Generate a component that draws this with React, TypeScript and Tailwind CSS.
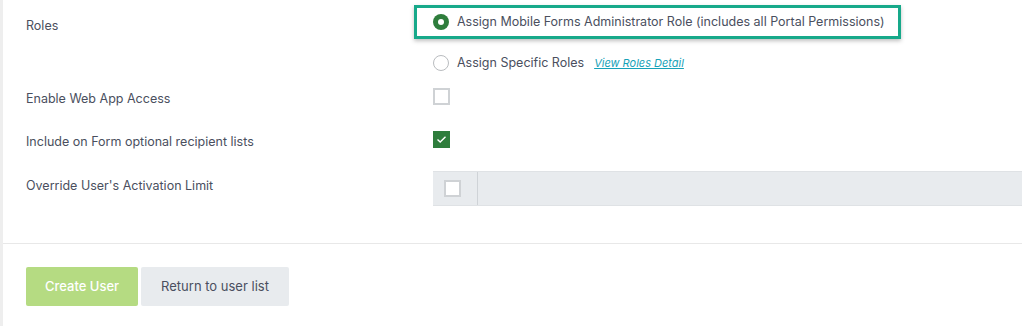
import React, { useState } from 'react';

const font = { fontFamily: 'Inter, "Open Sans", sans-serif' };

function Checkbox({ checked }: { checked?: boolean }) {
  if (checked) {
    return (
      <div className="w-[17px] h-[17px] bg-[#2e7d3c] flex items-center justify-center">
        <svg width="11" height="9" viewBox="0 0 11 9" fill="none">
          <path d="M1.5 4.5L4.2 7L9.5 1.8" stroke="white" strokeWidth="1.4" />
        </svg>
      </div>
    );
  }
  return <div className="w-[17px] h-[17px] border-2 border-[#cfd2d5] bg-white" />;
}

function Radio({ checked }: { checked?: boolean }) {
  if (checked) {
    return (
      <div className="w-4 h-4 rounded-full bg-[#2e7d3c] flex items-center justify-center">
        <div className="w-[6px] h-[6px] rounded-full bg-white" />
      </div>
    );
  }
  return <div className="w-4 h-4 rounded-full border border-[#b9bcbf] bg-white" />;
}

export default function App() {
  const [role] = useState<'admin' | 'specific'>('admin');

  return (
    <div className="h-[326px] w-full bg-white border-l-[3px] border-[#eeeeee] text-[12.5px] text-[#4a4f5e] whitespace-nowrap" style={font}>
      <div className="pt-[5px]">
        {/* Roles */}
        <div className="flex">
          <div className="w-[430px] pl-[23px] pt-[12px] leading-[18px]">Roles</div>
          <div className="flex flex-col items-start">
            <div className="-ml-[19px] h-[34px] border-[3px] border-[#17a98a] shadow-[0_2px_4px_rgba(0,0,0,0.25)] flex items-center gap-2 pl-4 pr-[13px]">
              <Radio checked={role === 'admin'} />
              <span className="leading-[18px]">Assign Mobile Forms Administrator Role (includes all Portal Permissions)</span>
            </div>
            <div className="mt-[15px] h-[18px] flex items-center gap-2">
              <Radio checked={role === 'specific'} />
              <span className="leading-[18px]">Assign Specific Roles</span>
              <a className="ml-[2px] text-[11px] italic underline text-[#17a2b8]">View Roles Detail</a>
            </div>
          </div>
        </div>

        {/* Enable Web App Access */}
        <div className="flex items-center mt-[16px] h-[17px]">
          <div className="w-[430px] pl-[23px] leading-[18px] mt-[5px]">Enable Web App Access</div>
          <Checkbox />
        </div>

        {/* Include on Form */}
        <div className="flex items-center mt-[26px] h-[17px]">
          <div className="w-[430px] pl-[23px] leading-[18px] mt-[5px]">Include on Form optional recipient lists</div>
          <Checkbox checked />
        </div>

        {/* Override */}
        <div className="flex items-center mt-[23px] h-[35px]">
          <div className="w-[430px] pl-[23px] leading-[18px] -mt-[5px]">Override User's Activation Limit</div>
          <div className="flex-1 h-[35px] flex bg-[#e8ebee] border-y border-[#dfe2e5]">
            <div className="w-[45px] flex items-center pl-[11px] border-r border-[#cfd3d7]">
              <Checkbox />
            </div>
            <div className="flex-1" />
          </div>
        </div>
      </div>

      <div className="mt-[37px] border-t border-[#e8e8e8]" />

      <div className="flex gap-[3px] pl-[23px] pt-[23px]">
        <button className="w-[112px] h-[39px] rounded-[2px] bg-[#b5db82] text-white text-[13px] font-medium">Create User</button>
        <button className="w-[148px] h-[39px] rounded-[2px] bg-[#e8ebee] text-[#4a4f5e] text-[13px]">Return to user list</button>
      </div>
    </div>
  );
}
